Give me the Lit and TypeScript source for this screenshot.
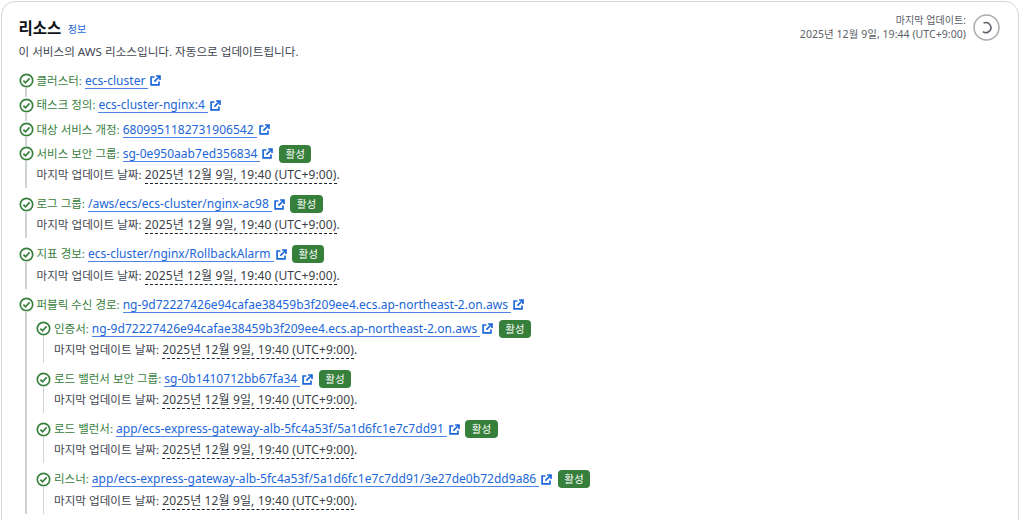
import { LitElement, html, css, nothing, TemplateResult } from "lit";
import { customElement } from "lit/decorators.js";

interface Res { label: string; link: string; active?: boolean; children?: Res[]; }

const resources: Res[] = [
  { label: "클러스터:", link: "ecs-cluster" },
  { label: "태스크 정의:", link: "ecs-cluster-nginx:4" },
  { label: "대상 서비스 개정:", link: "6809951182731906542" },
  { label: "서비스 보안 그룹:", link: "sg-0e950aab7ed356834", active: true },
  { label: "로그 그룹:", link: "/aws/ecs/ecs-cluster/nginx-ac98", active: true },
  { label: "지표 경보:", link: "ecs-cluster/nginx/RollbackAlarm", active: true },
  {
    label: "퍼블릭 수신 경로:",
    link: "ng-9d72227426e94cafae38459b3f209ee4.ecs.ap-northeast-2.on.aws",
    children: [
      { label: "인증서:", link: "ng-9d72227426e94cafae38459b3f209ee4.ecs.ap-northeast-2.on.aws", active: true },
      { label: "로드 밸런서 보안 그룹:", link: "sg-0b1410712bb67fa34", active: true },
      { label: "로드 밸런서:", link: "app/ecs-express-gateway-alb-5fc4a53f/5a1d6fc1e7c7dd91", active: true },
      { label: "리스너:", link: "app/ecs-express-gateway-alb-5fc4a53f/5a1d6fc1e7c7dd91/3e27de0b72dd9a86", active: true },
    ],
  },
];

const check = html`<svg class="check" viewBox="0 0 16 16" fill="none"><circle cx="8" cy="8" r="6.6" stroke="#37803c" stroke-width="1.8"/><path d="M4.7 8.1l2.3 2.3 4.3-4.6" stroke="#37803c" stroke-width="1.8"/></svg>`;
const ext = html`<svg class="ext" viewBox="0 0 12 12" fill="none"><path d="M4.8 2.2H1.2v8.6h8.6V7.2" stroke="#1b66d8" stroke-width="1.8"/><path d="M6.6 1.1h4.3v4.3M10.6 1.4L4.8 7.2" stroke="#1b66d8" stroke-width="1.8"/></svg>`;

@customElement("app-root")
export class AppRoot extends LitElement {
  static styles = css`
    :host {
      display: block;
      width: 1024px;
      height: 520px;
      overflow: hidden;
      background: #fff;
      font-family: "Noto Sans", "Noto Sans CJK KR", sans-serif;
      font-size: 12px;
      line-height: 20px;
      color: #1b232d;
    }
    .card {
      margin: 1px 0 0 1px;
      width: 1018px;
      height: 600px;
      box-sizing: border-box;
      border: 1.5px solid #d4d6d9;
      border-radius: 14px;
      padding: 15px 18px 0 16.5px;
    }
    .head { display: flex; justify-content: space-between; align-items: flex-start; }
    .title { display: flex; align-items: center; gap: 6.5px; height: 22px; }
    h2 { margin: 0; font-size: 15.5px; line-height: 22px; font-weight: 700; color: #0f141a; }
    .info { font-size: 10px; color: #1b66d8; line-height: 14px; margin-top: 1px; }
    .desc { color: #424650; font-size: 11.6px; line-height: 20px; margin-top: 3px; }
    .updated { display: flex; align-items: center; gap: 7px; text-align: right; margin: -4px 0 0; color: #5b6068; font-size: 10.5px; line-height: 14px; letter-spacing: 0.05px; }
    .updated-label { font-size: 10px; }
    .spinner { width: 27px; height: 27px; }
    ul { list-style: none; margin: 0; padding: 0; }
    .tree { margin-top: 6.6px; }
    li { position: relative; }
    .row { display: flex; align-items: center; height: 24.4px; white-space: nowrap; }
    .check { width: 15px; height: 15px; flex: none; }
    .label { color: #37803c; font-size: 11.5px; margin-left: 3px; }
    .link { color: #1b66d8; border-bottom: 1px solid #4f86e4; line-height: 15px; padding-right: 3px; margin-left: 3px; letter-spacing: 0.03px; }
    .ext { width: 11px; height: 11px; margin-left: 2px; }
    .badge { background: #37803c; color: #fff; font-size: 10.5px; line-height: 18px; border-radius: 4px; padding: 0 6.5px; margin-left: 5.5px; }
    .meta { padding-left: 18px; height: 18px; line-height: 17px; margin-bottom: 7.8px; color: #424650; white-space: nowrap; }
    .meta-label { font-size: 11.6px; }
    .time { border-bottom: 1px dashed #1b232d; color: #3a3f47; letter-spacing: 0.12px; }
    li.connect::before {
      content: "";
      position: absolute;
      left: 6.8px;
      top: 19px;
      bottom: -4px;
      width: 1.5px;
      background: #d0d2d5;
    }
    .children { padding-left: 17.5px; }
  `;

  private item(r: Res): TemplateResult {
    return html`<li class="connect">
      <div class="row">
        ${check}
        <span class="label">${r.label}</span>
        <span class="link">${r.link}</span>
        ${ext}
        ${r.active ? html`<span class="badge">활성</span>` : nothing}
      </div>
      ${r.active
        ? html`<div class="meta"><span class="meta-label">마지막 업데이트 날짜:</span> <span class="time">2025년 12월 9일, 19:40 (UTC+9:00)</span>.</div>`
        : nothing}
      ${r.children
        ? html`<ul class="children">${r.children.map((c) => this.item(c))}</ul>`
        : nothing}
    </li>`;
  }

  render() {
    return html`<section class="card">
      <div class="head">
        <div>
          <div class="title"><h2>리소스</h2><span class="info">정보</span></div>
          <div class="desc">이 서비스의 AWS 리소스입니다. 자동으로 업데이트됩니다.</div>
        </div>
        <div class="updated">
          <div><span class="updated-label">마지막 업데이트:</span><br />2025년 12월 9일, 19:44 (UTC+9:00)</div>
          <svg class="spinner" viewBox="0 0 27 27" fill="none">
            <circle cx="13.5" cy="13.5" r="12.5" stroke="#a9acb1" stroke-width="1.5"/>
            <path d="M10.5 9.2a5 5 0 1 1 -0.6 8.4" stroke="#5b6068" stroke-width="1.5"/>
          </svg>
        </div>
      </div>
      <ul class="tree">${resources.map((r) => this.item(r))}</ul>
    </section>`;
  }
}
